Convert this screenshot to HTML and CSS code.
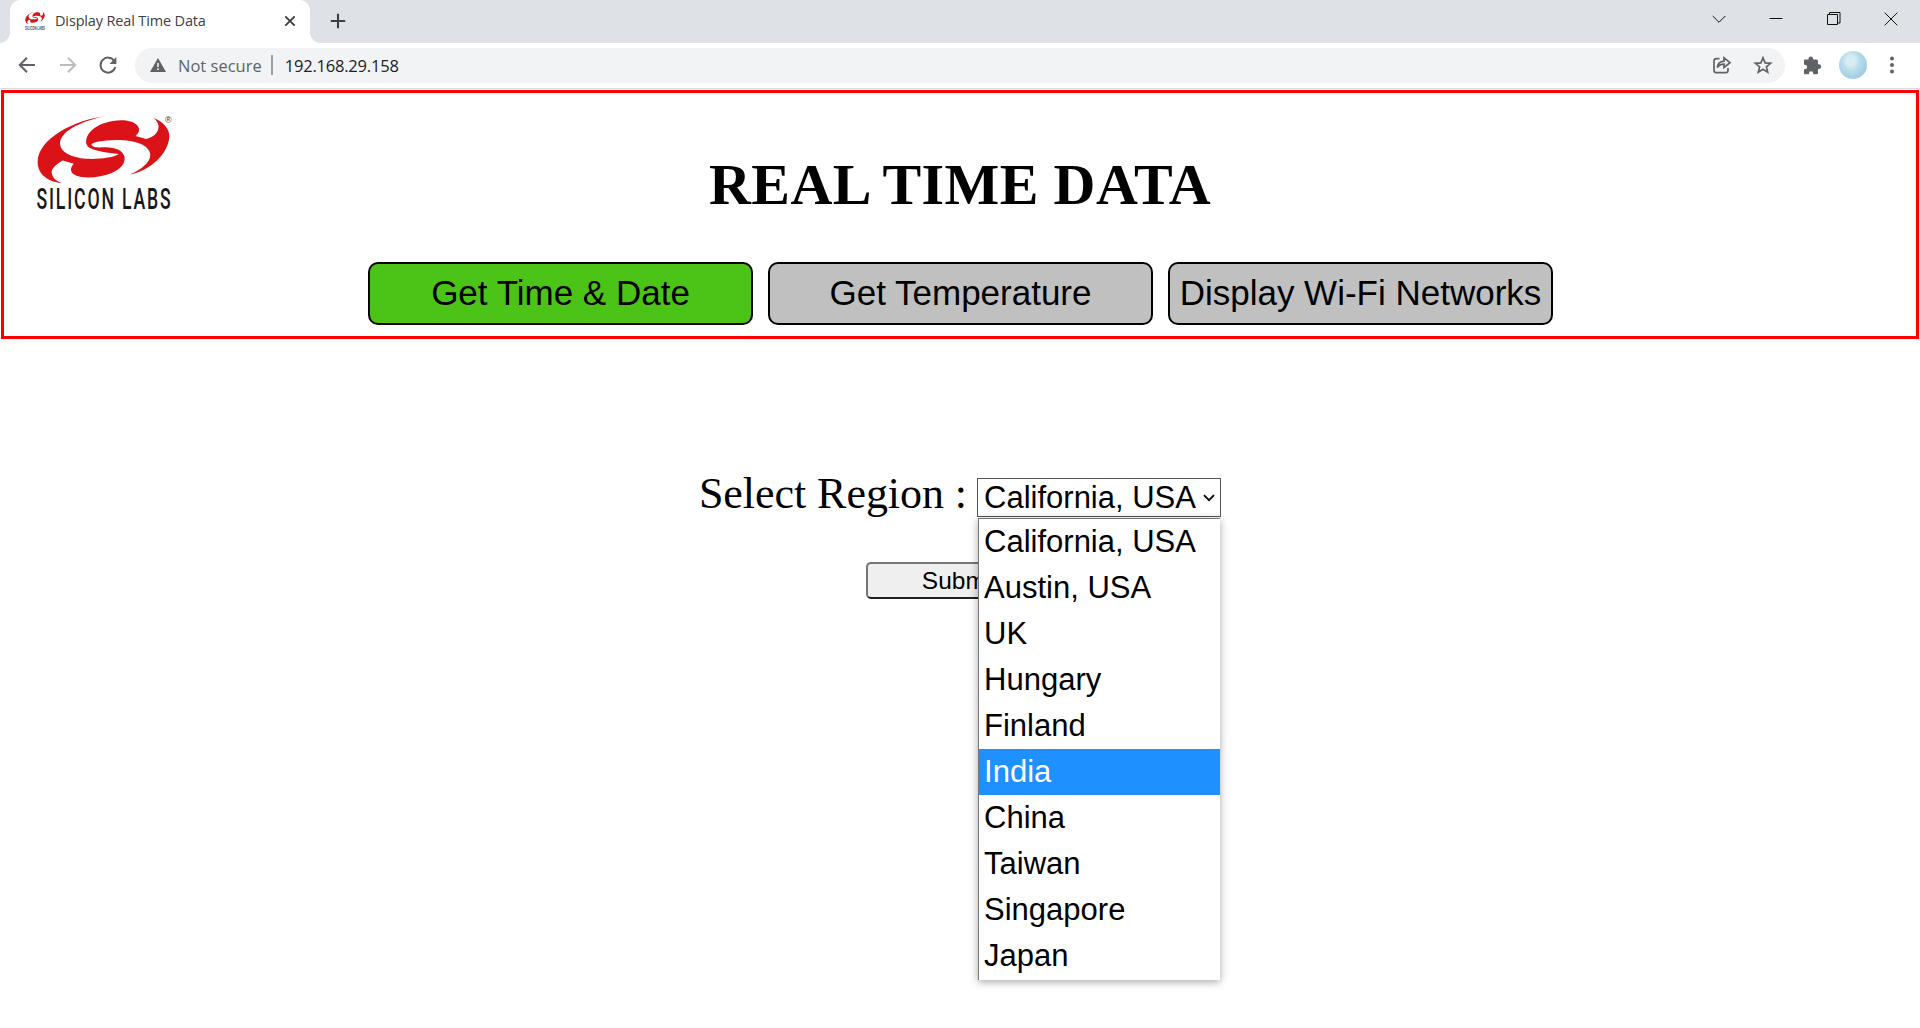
FILE: index.html
```html
<!DOCTYPE html>
<html lang="en">
<head>
<meta charset="utf-8">
<title>Display Real Time Data</title>
<link rel="stylesheet" href="styles.css">
</head>
<body>
<svg class="defs" width="0" height="0" aria-hidden="true">
  <symbol id="mark" viewBox="50 42 404 208" preserveAspectRatio="none">
    <path fill="#dc1219" d="M258 48C165 60 55 115 55 185C55 220 85 243 126 247C100 238 92 218 100 205C106 195 118 187 130 180L163 190C152 203 152 213 163 221C185 236 240 232 275 218C300 208 318 192 315 170C312 150 285 139 250 141C235 142 218 140 216 133C216 125 250 120 290 119C350 119 390 135 392 162C393 185 365 207 330 222C395 208 445 160 449 110C450 85 430 65 402 54C416 65 420 80 414 92C408 104 398 112 380 116L348 107C360 98 362 85 352 75C340 62 310 58 280 63C235 70 200 95 200 125C200 145 225 152 298 161C285 172 235 177 200 175C155 172 124 155 122 132C120 95 180 65 258 48Z"/>
  </symbol>
</svg>
<header class="tabstrip">
  <div class="tab">
    <svg class="favicon" width="20" height="20" viewBox="0 0 20 20"><use href="#mark" x="0" y="0" width="20" height="13"/><text x="0" y="18.500" textLength="20" lengthAdjust="spacingAndGlyphs" font-size="5.500" font-weight="700" fill="#444">SILICON LABS</text></svg>
    <span class="tab-title">Display Real Time Data</span>
    <svg class="tab-close" width="12" height="12" viewBox="0 0 12 12"><path d="M1.3 1.3l9.4 9.4M10.7 1.3l-9.4 9.4" stroke="#3c4043" stroke-width="1.9"/></svg>
  </div>
  <svg class="new-tab" width="16" height="16" viewBox="0 0 16 16"><path d="M8 .8v14.4M.8 8h14.4" stroke="#3c4043" stroke-width="2.1"/></svg>
  <div class="window-controls">
    <svg width="14" height="14" viewBox="0 0 14 14"><path d="M.7 4L7 10.3 13.300 4"/></svg>
    <svg width="14" height="14" viewBox="0 0 14 14"><path d="M.5 6.500h13"/></svg>
    <svg width="14" height="14" viewBox="0 0 14 14"><path d="M.5 2.500h10v10H.5zM2.500 2.500v-2h10.500v10.500h-2.500"/></svg>
    <svg width="14" height="14" viewBox="0 0 14 14"><path d="M.7.7l12.600 12.600M13.300.7L.7 13.300"/></svg>
  </div>
</header>
<nav class="toolbar">
  <svg class="nav-icon back" width="18" height="18" viewBox="0 0 18 18"><path d="M17 9H2M9 1.800L1.800 9 9 16.200"/></svg>
  <svg class="nav-icon forward" width="18" height="18" viewBox="0 0 18 18"><path d="M1 9h15M9 1.800L16.200 9 9 16.200"/></svg>
  <svg class="nav-icon reload" width="18" height="18" viewBox="0 0 18 18"><path d="M15.300 5A7.500 7.500 0 1 0 16.300 11"/><path class="solid" d="M17.400 1v7h-7z"/></svg>
  <div class="omnibox">
    <svg width="16" height="14" viewBox="0 0 16 14"><path fill="#5f6368" d="M8 0l8 14H0z"/><path stroke="#f1f3f4" stroke-width="1.600" d="M8 5v4M8 10.300v1.700"/></svg>
    <span class="secure">Not secure</span>
    <span class="divider"></span>
    <span class="url">192.168.29.158</span>
    <svg class="share" width="18" height="18" viewBox="0 0 18 18"><path d="M6.500 2.600H3.300Q1 2.600 1 5v9.200Q1 16.600 3.300 16.600h9.400Q15 16.600 15 14.200V12M4.300 11.500C4.700 7.500 7 5.500 11 5.200V1.800L17 6.700 11 11.500V8.200C7.800 8.200 5.800 9.200 4.300 11.500z"/></svg>
    <svg class="star" width="18" height="18" viewBox="0 0 18 18"><path d="M9 1.800l2.100 5.100 5.500.4-4.200 3.600 1.300 5.300L9 13.300l-4.700 2.900 1.300-5.300L1.400 7.300l5.500-.4z"/></svg>
  </div>
  <svg class="puzzle" width="19" height="19" viewBox="0 0 19 19"><path fill="#5f6368" d="M1 4.500Q1 3.500 2 3.500H5.500V2.800a2.300 2.300 0 0 1 4.600 0V3.500H13.500Q15 3.500 15 5V8.300h.9a2.300 2.300 0 0 1 0 4.600H15V17Q15 18.300 13.700 18.300H10.300V17.500a2.200 2.200 0 0 0-4.400 0v.8H2Q1 18.300 1 17.300V13.300h.8a2.300 2.300 0 0 0 0-4.600H1z"/></svg>
  <span class="avatar"></span>
  <svg class="more" width="4" height="18" viewBox="0 0 4 18"><g fill="#5f6368"><circle cx="2" cy="2.500" r="2"/><circle cx="2" cy="9" r="2"/><circle cx="2" cy="15.500" r="2"/></g></svg>
</nav>
<main class="page">
  <section class="banner">
    <svg class="logo" width="144" height="108" viewBox="0 0 144 108">
      <use href="#mark" x="4" y="3" width="135" height="70"/>
      <text class="brand" transform="translate(4.500 97.500) scale(1 1.220)" textLength="136" lengthAdjust="spacingAndGlyphs">SILICON LABS</text>
      <text class="reg" x="133" y="12">®</text>
    </svg>
    <h1>REAL TIME DATA</h1>
    <div class="actions">
      <button class="action active">Get Time &amp; Date</button>
      <button class="action">Get Temperature</button>
      <button class="action">Display Wi-Fi Networks</button>
    </div>
  </section>
  <section class="region-form">
    <div class="field">
      <span class="label">Select Region :</span>
      <div class="select">
        <span>California, USA</span>
        <svg width="12" height="8" viewBox="0 0 12 8"><path d="M1 1.200l5 5 5-5" fill="none" stroke="#000" stroke-width="1.800"/></svg>
        <ul class="options">
          <li>California, USA</li><li>Austin, USA</li><li>UK</li><li>Hungary</li><li>Finland</li>
          <li class="selected">India</li><li>China</li><li>Taiwan</li><li>Singapore</li><li>Japan</li>
        </ul>
      </div>
    </div>
    <button class="submit">Submit</button>
  </section>
</main>
</body>
</html>
```
FILE: styles.css
```css
* { box-sizing: border-box; }
body { margin: 0; height: 1028px; overflow: hidden; background: #fff; color: #000; font-family: "Liberation Serif", serif; }
svg { display: block; flex: none; overflow: visible; }
.defs { position: absolute; }

.tabstrip { display: flex; align-items: flex-start; height: 43px; background: #dee1e6; }
.tab { position: relative; display: flex; align-items: center; width: 300px; height: 43px; margin-left: 10px; padding: 0 15px 2px; background: #fff; border-radius: 10px 10px 0 0; font-family: "Open Sans", sans-serif; }
.tab::before, .tab::after { content: ""; position: absolute; bottom: 0; width: 10px; height: 10px; }
.tab::before { left: -10px; background: radial-gradient(circle at 0 0, transparent 9.5px, #fff 10px); }
.tab::after { right: -10px; background: radial-gradient(circle at 100% 0, transparent 9.5px, #fff 10px); }
.favicon { font-family: "Liberation Sans", sans-serif; }
.tab-title { margin-left: 10px; font-size: 14.500px; color: #3c4043; white-space: nowrap; letter-spacing: -.15px; }
.tab-close { margin-left: auto; margin-right: -1px; }
.new-tab { margin: 13px 0 0 20px; }
.window-controls { display: flex; gap: 43.500px; margin: 12px 22px 0 auto; }
.window-controls path { fill: none; stroke: #111; stroke-width: 1; }

.toolbar { display: flex; align-items: center; height: 46px; padding-bottom: 1px; border-bottom: 1px solid #dadce0; font-family: "Open Sans", sans-serif; }
.nav-icon path { fill: none; stroke: #5f6368; stroke-width: 2; }
.nav-icon .solid { fill: #5f6368; stroke: none; }
.back { margin-left: 18px; }
.forward { margin-left: 23px; }
.forward path { stroke: #bbbdc0; }
.reload { margin-left: 22px; }
.omnibox { display: flex; align-items: center; width: 1650px; height: 35px; margin-left: 18px; padding: 0 13px 0 15px; border-radius: 18px; background: #f1f3f4; font-size: 16.500px; }
.secure { margin-left: 12px; color: #5f6368; }
.divider { width: 2px; height: 20px; margin: 0 12px 0 9px; background: #9aa0a6; }
.url { color: #202124; letter-spacing: -.2px; }
.share { margin-left: auto; }
.star { margin-left: 23px; }
.share path, .star path { fill: none; stroke: #5f6368; stroke-width: 1.700; }
.puzzle { margin-left: 18px; }
.avatar { width: 28px; height: 28px; margin-left: 17px; border-radius: 50%; background: radial-gradient(ellipse at 42% 35%, #d5edf3 0 18%, #b7dcea 40%, #9ecbe2 75%, #b7dcea); }
.more { margin-left: 23px; }

.page { padding: 1px 1px 0; }
.banner { position: relative; height: 249px; padding-top: 59px; border: 3px solid #f00; }
.logo { position: absolute; left: 28px; top: 18px; }
.brand { font: 500 24px Roboto, sans-serif; letter-spacing: 2.500px; fill: #17181a; }
.reg { font: 9px "Liberation Sans", sans-serif; fill: #333; }
h1 { margin: 0; text-align: center; font-size: 58px; line-height: 66px; letter-spacing: .4px; }
.actions { display: flex; justify-content: center; gap: 15px; margin-top: 44px; padding-left: 1px; }
.action { width: 385px; height: 63px; padding: 0 0 2px; border: 2px solid #000; border-radius: 10px; background: #c0c0c0; font: 35px "Liberation Sans", sans-serif; color: #000; white-space: nowrap; }
.action.active { background: #4bc417; }

.region-form { display: flex; flex-direction: column; align-items: center; padding-top: 139px; }
.field { display: flex; align-items: flex-start; }
.label { margin: -9px 10px 0 0; font-size: 44px; line-height: 50px; letter-spacing: -.05px; white-space: nowrap; }
.select { position: relative; display: flex; align-items: center; justify-content: space-between; width: 244px; height: 39px; padding: 0 5px 0 6px; border: 1px solid #555; background: #fff; font: 31px "Liberation Sans", sans-serif; white-space: nowrap; }
.options { position: absolute; z-index: 2; left: 0; top: 39px; width: 242px; margin: 0; padding: 0 0 1px; list-style: none; background: #fff; border-top: 1px solid #767676; border-left: 1px solid #767676; box-shadow: 0 2px 8px rgba(0,0,0,.35); }
.options li { height: 46px; padding-left: 5px; line-height: 46px; }
.options .selected { background: #1e90ff; color: #fff; }
.submit { width: 188px; height: 37px; margin-top: 43px; padding: 0; border: 2px solid; border-color: #767676 #212121 #212121 #767676; border-radius: 5px; background: #efefef; font: 24.500px "Liberation Sans", sans-serif; color: #000; }
```
